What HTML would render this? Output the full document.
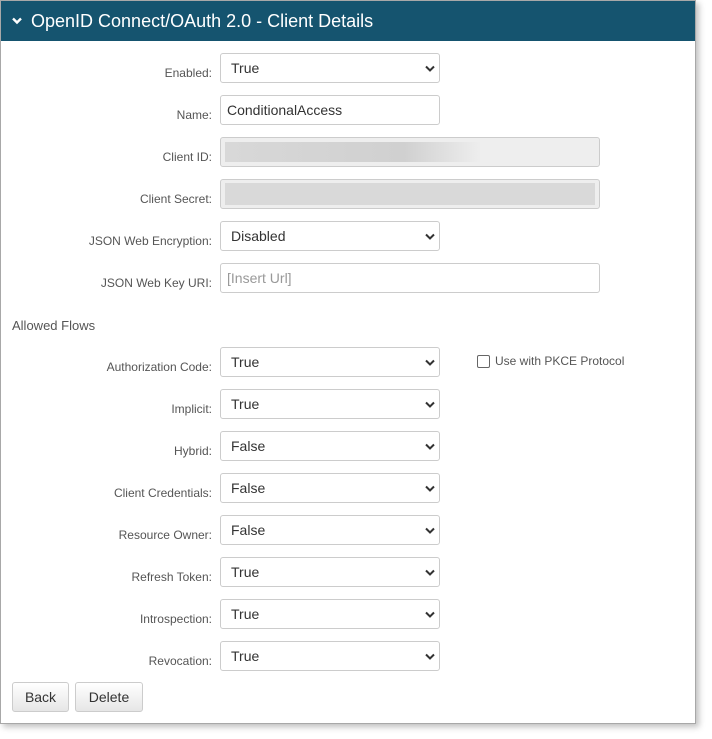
<!DOCTYPE html><html><head><style>
body{margin:0;background:#fff;font-family:"Liberation Sans",Arial,sans-serif;}
.box{position:absolute;left:0;top:0;width:694px;height:722px;border:1px solid #a8a8a8;box-shadow:3px 3px 6px rgba(0,0,0,.25);background:#fff;}
.hdr{position:absolute;left:0;top:0;width:694px;height:40px;background:#15546f;color:#fff;font-size:18px;line-height:40px;}
.hdr span{position:absolute;left:30px;top:0}
.f{position:absolute;left:220px;height:28px;border:1px solid #ccc;border-radius:3px;background:#fff;font-size:14px;color:#333;line-height:28px;box-sizing:content-box;}
.f .t{position:absolute;left:10px;top:0px}
.l{position:absolute;right:500px;font-size:12px;color:#555;}
.btn{position:absolute;top:682px;height:28px;border:1px solid #ccc;border-radius:3px;background:linear-gradient(#fff,#e6e6e6);font-size:14px;color:#333;line-height:28px;text-align:center}
</style></head><body>
<div class="box">
<div class="hdr"><svg style="position:absolute;left:11px;top:16px" width="10" height="8" viewBox="0 0 10 8"><path d="M1 1.5 L5 5.5 L9 1.5" stroke="#fff" stroke-width="2.4" fill="none"/></svg><span>OpenID Connect/OAuth 2.0 - Client Details</span></div>
</div>
<div id="c"></div>
<script>
var rows=[["Enabled:",53,"True","s"],["Name:",95,"ConditionalAccess","i"],["Client ID:",137,"","r1"],["Client Secret:",179,"","r2"],["JSON Web Encryption:",221,"Disabled","s"],["JSON Web Key URI:",263,"[Insert Url]","p"],["Authorization Code:",347,"True","s"],["Implicit:",389,"True","s"],["Hybrid:",431,"False","s"],["Client Credentials:",473,"False","s"],["Resource Owner:",515,"False","s"],["Refresh Token:",557,"True","s"],["Introspection:",599,"True","s"],["Revocation:",641,"True","s"]];
var h="";
rows.forEach(function(r){
h+='<div class="l" style="top:'+(r[1]+13)+'px">'+r[0]+'</div>';
var w=(r[3]=="s"||r[3]=="i")?218:378;
var bg=(r[3][0]=="r")?"#eee":"#fff";
h+='<div class="f" style="top:'+r[1]+'px;width:'+w+'px;background:'+bg+'">';
if(r[3]=="r1")h+='<div style="position:absolute;left:4px;top:4px;width:256px;height:20px;background:linear-gradient(90deg,#d8d8d8,#d0d0d0 70%,#eee)"></div>';
if(r[3]=="r2")h+='<div style="position:absolute;left:4px;top:3px;width:370px;height:22px;background:#d9d9d9"></div>';
if(r[2])h+='<span class="t" style="color:'+(r[3]=="p"?"#999":"#333")+';left:'+(r[3]=="s"?10:6)+'px">'+r[2]+'</span>';
if(r[3]=="s")h+='<svg style="position:absolute;right:4px;top:11px" width="10" height="7" viewBox="0 0 10 7"><path d="M1 1.5 L5 5.5 L9 1.5" stroke="#333" stroke-width="2" fill="none"/></svg>';
h+='</div>';});
h+='<div style="position:absolute;left:12px;top:318px;font-size:13px;color:#555">Allowed Flows</div>';
h+='<div style="position:absolute;left:477px;top:355px;width:11px;height:11px;border:1px solid #666;border-radius:2px"></div><div style="position:absolute;left:495px;top:354px;font-size:12px;color:#555">Use with PKCE Protocol</div>';
h+='<div class="btn" style="left:12px;width:55px">Back</div><div class="btn" style="left:75px;width:66px">Delete</div>';
document.getElementById("c").innerHTML=h;
</script>
</body></html>
